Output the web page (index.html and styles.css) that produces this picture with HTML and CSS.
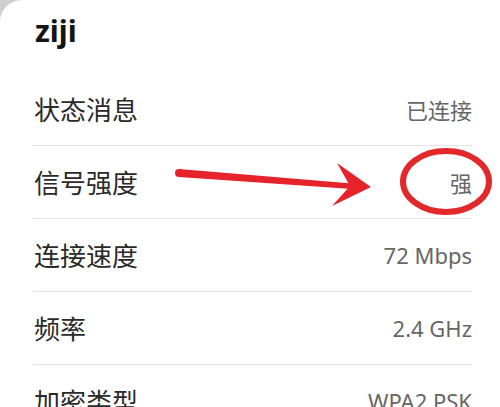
FILE: index.html
```html
<!DOCTYPE html>
<html lang="zh-CN">
<head>
<meta charset="utf-8">
<title>ziji</title>
<link rel="stylesheet" href="styles.css">
</head>
<body>
<div class="card">
  <h1 class="title">ziji</h1>
  <div class="row"><span class="label">状态消息</span><span class="value">已连接</span></div>
  <div class="row"><span class="label">信号强度</span><span class="value">强</span></div>
  <div class="row"><span class="label">连接速度</span><span class="value">72 Mbps</span></div>
  <div class="row"><span class="label">频率</span><span class="value">2.4 GHz</span></div>
  <div class="row"><span class="label">加密类型</span><span class="value">WPA2 PSK</span></div>
  <svg class="annot" width="500" height="407" viewBox="0 0 500 407" aria-hidden="true">
    <circle cx="179" cy="173" r="4" fill="#e6232a"/>
    <polygon points="179,169 352,183.5 352,189 179,177" fill="#e6232a"/>
    <polygon points="337,163 371,187 332,206 350,186" fill="#e6232a"/>
    <ellipse cx="446" cy="181.5" rx="43" ry="30.5" fill="none" stroke="#e3282b" stroke-width="6"/>
  </svg>
</div>
</body>
</html>
```
FILE: styles.css
```css
html, body {
  margin: 0;
  padding: 0;
  height: 407px;
  overflow: hidden;
  background: #cfcfcf;
}
.card {
  position: relative;
  background: #ffffff;
  height: 407px;
  overflow: hidden;
  border-top-left-radius: 22px;
  padding: 0 28px 0 33px;
  box-sizing: border-box;
  font-family: "Noto Sans", "Noto Sans CJK SC", sans-serif;
}
.title {
  margin: 0;
  height: 73px;
  box-sizing: border-box;
  padding: 11px 0 0 2px;
  font-size: 30px;
  line-height: 40px;
  font-weight: 700;
  color: #141414;
}
.row {
  display: flex;
  align-items: center;
  justify-content: space-between;
  height: 73px;
  box-sizing: border-box;
  border-bottom: 1px solid #e4e4e4;
}
.label {
  font-size: 26px;
  color: #2a2a2a;
  padding-left: 1px;
}
.value {
  font-size: 22px;
  color: #666666;
}
.annot {
  position: absolute;
  left: 0;
  top: 0;
  pointer-events: none;
}
```
